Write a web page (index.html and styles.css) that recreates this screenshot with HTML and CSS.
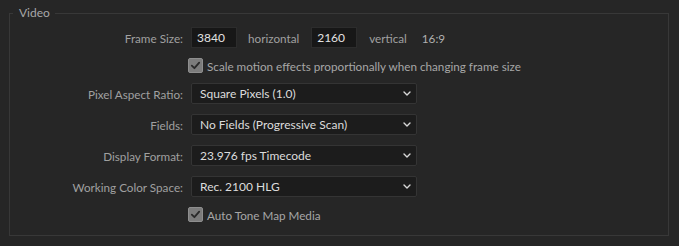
FILE: index.html
```html
<!DOCTYPE html>
<html lang="en">
<head>
<meta charset="utf-8">
<title>Video</title>
<link rel="stylesheet" href="styles.css">
</head>
<body>
<fieldset class="group">
  <legend class="group-title">Video</legend>
  <div class="form">
    <div class="label">Frame Size:</div>
    <div class="control frame">
      <div class="num">3840</div>
      <span class="unit unit-h">horizontal</span>
      <div class="num">2160</div>
      <span class="unit unit-v">vertical</span>
      <span class="ratio">16:9</span>
    </div>

    <div class="label"></div>
    <label class="control check">
      <span class="box"><svg viewBox="0 0 15 15" width="15" height="15"><path d="M3.8 7.6 L6.4 10.2 L11.2 4.6" fill="none" stroke="#2a2a2a" stroke-width="1.8" stroke-linecap="round" stroke-linejoin="round"/></svg></span>
      <span class="check-text">Scale motion effects proportionally when changing frame size</span>
    </label>

    <div class="label">Pixel Aspect Ratio:</div>
    <div class="control select"><span>Square Pixels (1.0)</span><svg class="chev" viewBox="0 0 8 5" width="8" height="5"><path d="M1 1 L4 4 L7 1" fill="none" stroke="#d8d8d8" stroke-width="1.4" stroke-linecap="round" stroke-linejoin="round"/></svg></div>

    <div class="label">Fields:</div>
    <div class="control select"><span>No Fields (Progressive Scan)</span><svg class="chev" viewBox="0 0 8 5" width="8" height="5"><path d="M1 1 L4 4 L7 1" fill="none" stroke="#d8d8d8" stroke-width="1.4" stroke-linecap="round" stroke-linejoin="round"/></svg></div>

    <div class="label">Display Format:</div>
    <div class="control select"><span>23.976 fps Timecode</span><svg class="chev" viewBox="0 0 8 5" width="8" height="5"><path d="M1 1 L4 4 L7 1" fill="none" stroke="#d8d8d8" stroke-width="1.4" stroke-linecap="round" stroke-linejoin="round"/></svg></div>

    <div class="label">Working Color Space:</div>
    <div class="control select"><span>Rec. 2100 HLG</span><svg class="chev" viewBox="0 0 8 5" width="8" height="5"><path d="M1 1 L4 4 L7 1" fill="none" stroke="#d8d8d8" stroke-width="1.4" stroke-linecap="round" stroke-linejoin="round"/></svg></div>

    <div class="label"></div>
    <label class="control check">
      <span class="box"><svg viewBox="0 0 15 15" width="15" height="15"><path d="M3.8 7.6 L6.4 10.2 L11.2 4.6" fill="none" stroke="#2a2a2a" stroke-width="1.8" stroke-linecap="round" stroke-linejoin="round"/></svg></span>
      <span class="check-text">Auto Tone Map Media</span>
    </label>
  </div>
</fieldset>
</body>
</html>
```
FILE: styles.css
```css
html, body {
  margin: 0;
  padding: 0;
  background: #262626;
}
body {
  font-family: Lato, "Noto Sans", sans-serif;
  font-size: 11.7px;
  color: #a6a6a6;
  width: 679px;
  height: 246px;
  overflow: hidden;
}
.group {
  box-sizing: border-box;
  margin: 5px 0 0 9px;
  width: 660px;
  padding: 6px 0 13px 0;
  border: 1px solid #383838;
  min-width: 0;
}
.group-title {
  margin-left: 3px;
  padding: 0 5px 0 6px;
  line-height: 16px;
  height: 16px;
  color: #a8a8a8;
  font-size: 12px;
}
.form {
  display: grid;
  grid-template-columns: 173px 1fr;
  column-gap: 8px;
  row-gap: 10px;
  grid-auto-rows: auto;
}
.label {
  text-align: right;
  display: flex;
  align-items: center;
  justify-content: flex-end;
  white-space: nowrap;
  color: #a0a0a0;
}
.control {
  display: flex;
  align-items: center;
}
.frame {
  height: 21px;
}
.num {
  box-sizing: border-box;
  width: 46px;
  height: 21px;
  line-height: 19px;
  padding-left: 5px;
  background: #171717;
  border: 1px solid #2c2c2c;
  color: #e2e2e2;
  font-size: 12px;
}
.unit {
  color: #a0a0a0;
}
.unit-h {
  margin: 0 12px 0 11px;
}
.unit-v {
  margin: 0 15px 0 12px;
}
.ratio {
  color: #b0b0b0;
}
.check {
  height: 15px;
  margin-left: -3px;
}
.box {
  box-sizing: border-box;
  width: 15px;
  height: 15px;
  border-radius: 2px;
  background: #7c7c7c;
  border: 1px solid #8e8e8e;
  display: flex;
  align-items: center;
  justify-content: center;
  margin-right: 4px;
}
.box svg {
  display: block;
  flex: none;
}
.check-text {
  color: #a6a6a6;
  white-space: nowrap;
}
.select {
  box-sizing: border-box;
  width: 226px;
  height: 21px;
  padding: 0 5px 0 8px;
  background: #1c1c1c;
  border: 1px solid #343434;
  border-radius: 2px;
  justify-content: space-between;
  color: #dcdcdc;
  font-size: 12px;
}
.chev {
  display: block;
}
```
